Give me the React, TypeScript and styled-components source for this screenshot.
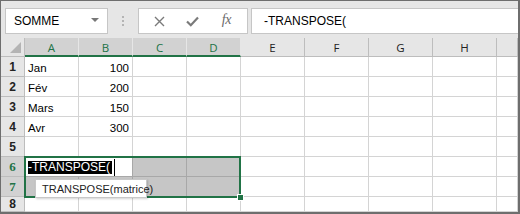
import React from 'react';
import styled, { createGlobalStyle, css } from 'styled-components';

const GlobalStyle = createGlobalStyle`
  html, body {
    margin: 0;
    padding: 0;
    background: #ffffff;
  }
  * {
    box-sizing: border-box;
  }
`;

const GREEN = '#217346';

const columns = [
  { name: 'A', selected: true },
  { name: 'B', selected: true },
  { name: 'C', selected: true },
  { name: 'D', selected: true },
  { name: 'E', selected: false },
  { name: 'F', selected: false },
  { name: 'G', selected: false },
  { name: 'H', selected: false },
  { name: '', selected: false },
];

const data: Record<number, [string, string]> = {
  1: ['Jan', '100'],
  2: ['Fév', '200'],
  3: ['Mars', '150'],
  4: ['Avr', '300'],
};

const App = () => {
  const rows = [1, 2, 3, 4, 5, 6, 7, 8];

  const renderCell = (row: number, col: number) => {
    // the in-cell editor of A6 covers B6 too
    if (row === 6 && col === 1) return null;
    if (row === 6 && col === 0) {
      return (
        <Editor key={col}>
          <EditText>-TRANSPOSE(</EditText>
          <Caret />
        </Editor>
      );
    }
    const shaded = row >= 6 && row <= 7 && col < 4;
    const value = data[row];
    return (
      <Cell key={col} $shaded={shaded} $right={col === 1}>
        {value && col < 2 ? value[col] : ''}
      </Cell>
    );
  };

  return (
    <Frame>
      <GlobalStyle />
      <Toolbar>
        <NameBox>
          <span>SOMME</span>
          <DropArrow />
        </NameBox>
        <Grip>
          <i />
          <i />
          <i />
        </Grip>
        <Buttons>
          <IconButton>
            <svg width="11" height="11" viewBox="0 0 11 11">
              <path d="M1 1 L10 10 M10 1 L1 10" stroke="#7a7a7a" strokeWidth="1.4" fill="none" />
            </svg>
          </IconButton>
          <IconButton>
            <svg width="13" height="11" viewBox="0 0 13 11">
              <path d="M1 5.5 L4.8 9.2 L12 1.6" stroke="#7a7a7a" strokeWidth="2.2" fill="none" />
            </svg>
          </IconButton>
          <IconButton>
            <Fx>fx</Fx>
          </IconButton>
        </Buttons>
        <FormulaInput>-TRANSPOSE(</FormulaInput>
      </Toolbar>

      <Sheet>
        <Corner>
          <svg width="11" height="11" viewBox="0 0 11 11">
            <path d="M11 0 L11 11 L0 11 Z" fill="#b4b4b4" />
          </svg>
        </Corner>
        {columns.map((c, i) => (
          <ColHead key={i} $selected={c.selected}>
            {c.name}
          </ColHead>
        ))}
        {rows.map((r) => (
          <React.Fragment key={r}>
            <RowHead $selected={r === 6 || r === 7}>{r}</RowHead>
            {columns.map((_, ci) => renderCell(r, ci))}
          </React.Fragment>
        ))}
        <Selection>
          <Handle />
        </Selection>
        <Tip>
          TRANSPOSE(<span>matrice)</span>
        </Tip>
      </Sheet>
    </Frame>
  );
};

export default App;

const Frame = styled.div`
  width: 520px;
  height: 214px;
  border-top: 1px solid #6e6e6e;
  border-left: 1px solid #6e6e6e;
  border-right: 2px solid #6e6e6e;
  border-bottom: 2px solid #6e6e6e;
  background: #e6e6e6;
  display: flex;
  flex-direction: column;
  overflow: hidden;
  font-family: 'Liberation Sans', Arial, sans-serif;
`;

const Toolbar = styled.div`
  height: 43px;
  display: flex;
  align-items: flex-start;
  padding: 7px 0 0 4px;
  background: #e6e6e6;
`;

const boxStyle = css`
  height: 26px;
  background: #ffffff;
  border: 1px solid #c6c6c6;
  display: flex;
  align-items: center;
`;

const NameBox = styled.div`
  ${boxStyle};
  width: 103px;
  padding: 0 8px 0 8px;
  justify-content: space-between;
  font-size: 12px;
  color: #000;
`;

const DropArrow = styled.span`
  width: 0;
  height: 0;
  border-left: 4px solid transparent;
  border-right: 4px solid transparent;
  border-top: 4px solid #777;
  margin-top: -3px;
`;

const Grip = styled.div`
  width: 30px;
  height: 26px;
  display: flex;
  flex-direction: column;
  align-items: center;
  justify-content: center;
  gap: 2px;
  i {
    display: block;
    width: 2px;
    height: 2px;
    background: #b4b4b4;
  }
`;

const Buttons = styled.div`
  ${boxStyle};
  width: 110px;
  padding: 0 4px;
  justify-content: space-around;
`;

const IconButton = styled.div`
  width: 30px;
  height: 24px;
  display: flex;
  align-items: center;
  justify-content: center;
`;

const Fx = styled.span`
  font-family: 'Liberation Serif', 'Times New Roman', serif;
  font-style: italic;
  font-size: 14px;
  color: #6a6a6a;
  letter-spacing: -0.5px;
  margin-top: -2px;
`;

const FormulaInput = styled.div`
  ${boxStyle};
  flex: 1;
  margin-left: 3px;
  border-right: none;
  padding-left: 12px;
  font-size: 12px;
  color: #000;
`;

const Sheet = styled.div`
  position: relative;
  flex: 1;
  display: grid;
  grid-template-columns: 24px repeat(4, 54px) repeat(4, 64px) 1fr;
  grid-template-rows: 19px repeat(7, 20px) 1fr;
  background: #ffffff;
`;

const Corner = styled.div`
  background: #e6e6e6;
  border-right: 1px solid #bdbdbd;
  border-bottom: 1px solid #bdbdbd;
  display: flex;
  align-items: flex-end;
  justify-content: flex-end;
  padding: 0 3px 3px 0;
`;

const ColHead = styled.div<{ $selected: boolean }>`
  display: flex;
  align-items: center;
  justify-content: center;
  font-family: 'Open Sans', 'Liberation Sans', sans-serif;
  font-size: 11.5px;
  padding-top: 1px;
  background: ${({ $selected }) => ($selected ? '#d2d2d2' : '#e6e6e6')};
  color: ${({ $selected }) => ($selected ? GREEN : '#222')};
  border-right: 1px solid ${({ $selected }) => ($selected ? '#e6e6e6' : '#bdbdbd')};
  border-bottom: ${({ $selected }) => ($selected ? `2px solid ${GREEN}` : '1px solid #bdbdbd')};
`;

const RowHead = styled.div<{ $selected: boolean }>`
  display: flex;
  align-items: center;
  justify-content: center;
  font-weight: bold;
  font-size: ${({ $selected }) => ($selected ? '13px' : '12px')};
  font-family: ${({ $selected }) =>
    $selected ? "'Liberation Serif', 'Times New Roman', serif" : "'Liberation Sans', Arial, sans-serif"};
  background: ${({ $selected }) => ($selected ? '#d2d2d2' : '#e6e6e6')};
  color: ${({ $selected }) => ($selected ? GREEN : '#222')};
  border-right: 1px solid #bdbdbd;
  border-bottom: 1px solid #bdbdbd;
`;

const Cell = styled.div<{ $shaded: boolean; $right?: boolean }>`
  display: flex;
  align-items: center;
  justify-content: ${({ $right }) => ($right ? 'flex-end' : 'flex-start')};
  padding: 2px 3px 0 3px;
  font-size: 11.5px;
  color: #000;
  white-space: nowrap;
  background: ${({ $shaded }) => ($shaded ? '#c6c6c6' : '#ffffff')};
  border-right: 1px solid ${({ $shaded }) => ($shaded ? '#a8a8a8' : '#d4d4d4')};
  border-bottom: 1px solid ${({ $shaded }) => ($shaded ? '#a8a8a8' : '#d4d4d4')};
`;

const Editor = styled.div`
  grid-column: span 2;
  display: flex;
  align-items: center;
  padding: 1px 0 0 3px;
  background: #ffffff;
  border-right: 1px solid #a8a8a8;
  border-bottom: 1px solid #a8a8a8;
  white-space: nowrap;
`;

const EditText = styled.span`
  background: #000;
  color: #fff;
  font-size: 12px;
  line-height: 13px;
  padding-right: 2px;
`;

const Caret = styled.span`
  display: block;
  width: 1px;
  height: 17px;
  background: #000;
  margin-left: 2px;
`;

const Selection = styled.div`
  position: absolute;
  left: 23px;
  top: 118px;
  width: 217px;
  height: 42px;
  border: 2px solid ${GREEN};
  pointer-events: none;
  z-index: 2;
`;

const Handle = styled.div`
  position: absolute;
  right: -5px;
  bottom: -5px;
  width: 7px;
  height: 7px;
  background: ${GREEN};
  border: 1px solid #fff;
`;

const Tip = styled.div`
  position: absolute;
  left: 34px;
  top: 141px;
  width: 112px;
  height: 19px;
  background: #ffffff;
  border: 1px solid #c8c8c8;
  box-shadow: 1px 1px 2px rgba(0, 0, 0, 0.18);
  display: flex;
  align-items: center;
  padding-left: 6px;
  font-size: 11px;
  color: #222;
  white-space: nowrap;
  z-index: 3;
`;
